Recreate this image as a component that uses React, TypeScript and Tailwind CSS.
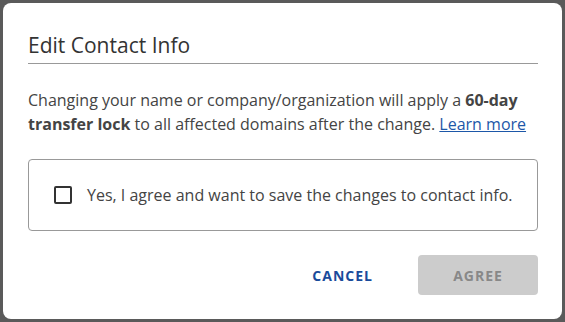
export default function App() {
  return (
    <div className="w-[565px] h-[322px] bg-[#5a5a5a] p-[3px] font-['Open_Sans',sans-serif]">
      <div className="w-[559px] h-[316px] bg-white rounded-[8px] pl-[25px] pr-[24px] pt-[28px] flex flex-col">
        <h2 className="text-[21px] leading-[28px] text-[#333] pb-[4px] border-b border-[#999]">
          Edit Contact Info
        </h2>
        <p className="mt-[24px] text-[16px] leading-[24px] text-[#444]">
          Changing your name or company/organization will apply a{' '}
          <b className="font-bold">60-day transfer lock</b> to all affected domains after the change.{' '}
          <a href="#" className="text-[#1d57a8] underline">
            Learn more
          </a>
        </p>
        <label className="mt-[23px] h-[72px] border border-[#999] rounded-[4px] flex items-center gap-[15px] pl-[25px]">
          <span className="w-[18px] h-[18px] border-2 border-[#333] rounded-[2px]" />
          <span className="text-[16px] text-[#444]">
            Yes, I agree and want to save the changes to contact info.
          </span>
        </label>
        <div className="mt-[24px] flex items-center justify-end">
          <button className="text-[14px] font-bold tracking-[1px] text-[#1a4b9b] mr-[45px]">
            CANCEL
          </button>
          <button className="w-[120px] h-[40px] bg-[#cccccc] rounded-[4px] text-[14px] font-bold tracking-[1px] text-[#888]">
            AGREE
          </button>
        </div>
      </div>
    </div>
  )
}
